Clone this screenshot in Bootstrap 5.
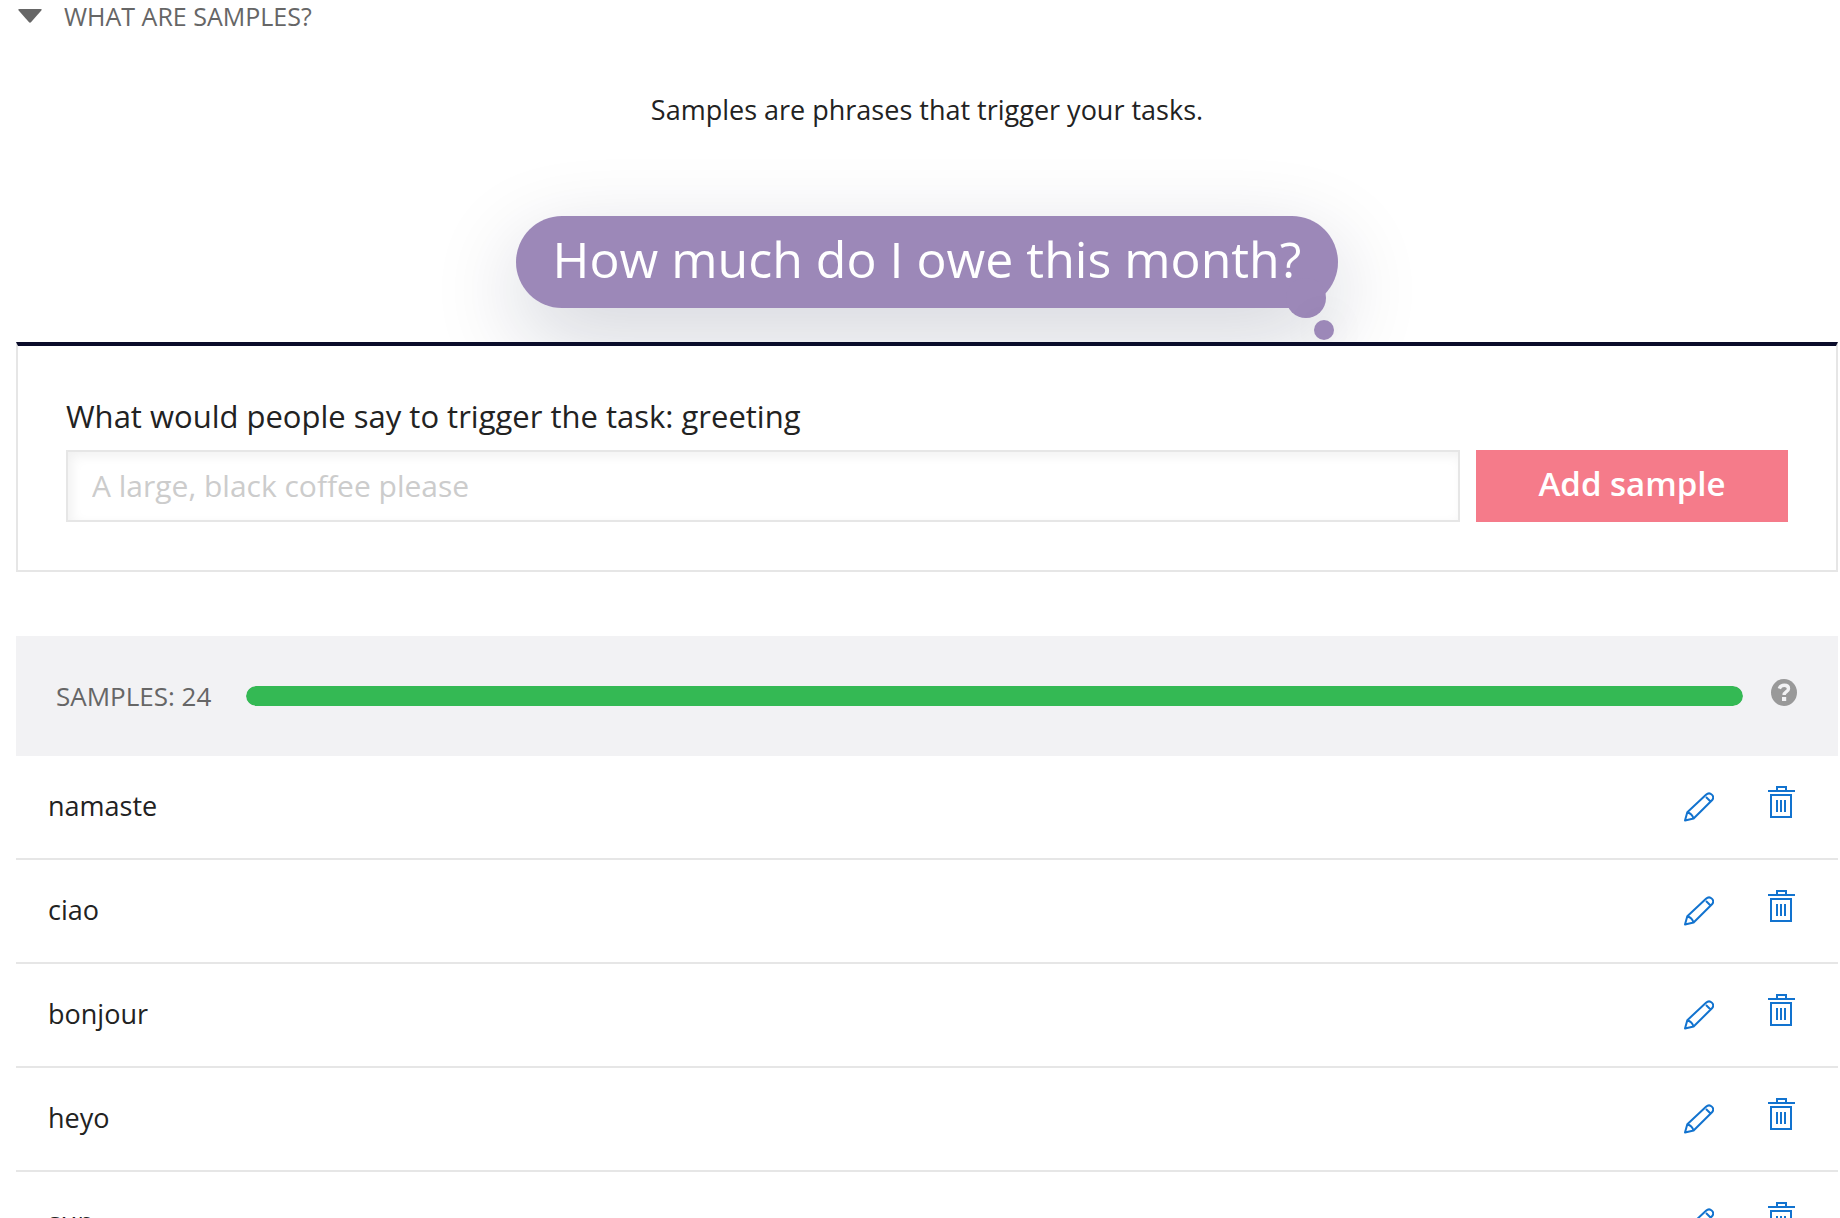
<!DOCTYPE html>
<html lang="en">
<head>
<meta charset="utf-8">
<meta name="viewport" content="width=device-width, initial-scale=1">
<title>Samples</title>
<link href="https://cdn.jsdelivr.net/npm/bootstrap@5.3.0/dist/css/bootstrap.min.css" rel="stylesheet">
<style>
  body { font-family: "Open Sans", "Noto Sans", sans-serif; font-weight: 500; color: #222; background: #fff; font-size: 27px; line-height: 32px; overflow-x: hidden; }
  .page-wrap { height: 100vh; overflow: hidden; padding: 0 2px 0 16px; }
  .explain-toggle { background: none; border: 0; padding: 0 2px; gap: 22px; color: #666; font-size: 25px; line-height: 32px; font-weight: 500; }
  .explain-text { margin-top: 62px; }
  .bubble-row { margin-top: 90px; padding-bottom: 34px; }
  .bubble { position: relative; background: #9c88b8; color: #fff; font-size: 50px; line-height: 86px; padding-bottom: 6px; font-weight: 400; width: 822px; text-align: center; border-radius: 46px; box-shadow: 0 28px 88px rgba(10, 20, 60, .19); }
  .bubble::before, .bubble::after { content: ""; position: absolute; background: #9c88b8; border-radius: 50%; }
  .bubble::before { width: 40px; height: 40px; right: 12px; bottom: -10px; }
  .bubble::after { width: 20px; height: 20px; right: 4px; bottom: -32px; box-shadow: 0 0 40px rgba(10, 20, 60, .12); }
  .bubble span { position: relative; z-index: 1; }
  .entry-panel { position: relative; background: #fff; border: 2px solid #e6e6e6; border-top: 4px solid #0a0c2a; padding: 48px; }
  .entry-panel label { font-size: 31px; line-height: 44px; margin-bottom: 12px; }
  .entry-panel .form-control { height: 72px; border: 2px solid #e6e6e6; border-radius: 0; padding: 0 24px 2px; font-size: 30px; box-shadow: inset 4px 4px 12px rgba(0, 0, 0, .06); }
  .entry-panel .form-control::placeholder { color: #ccc; }
  .btn-add { width: 312px; height: 72px; border: 0; border-radius: 0; background: #f57b8a; color: #fff; font-size: 33px; font-weight: 600; padding: 0 0 4px; }
  .samples-head { margin-top: 64px; height: 120px; padding: 0 41px 0 40px; gap: 28px; background: #f2f2f4; }
  .samples-count { color: #666; font-size: 26px; min-width: 162px; }
  .progress.samples-bar { height: 20px; border-radius: 10px; background: #ddd; }
  .samples-bar .progress-bar { background: #34b954; border-radius: 10px; }
  .help-btn { background: none; border: 0; padding: 0 0 7px; line-height: 0; }
  .sample-list > .list-group-item.sample-row { border-width: 0 0 2px; border-color: #e6e6e6; }
  .sample-row { height: 104px; padding: 0 43px 2px 32px; color: #222; }
  .icon-btn { background: none; border: 0; padding: 0; line-height: 0; }
  .edit-btn { padding-top: 6px; }
  .delete-btn { padding-bottom: 8px; }
  .sample-actions { gap: 54px; }
</style>
</head>
<body>
<main class="page-wrap">
  <button type="button" class="explain-toggle d-flex align-items-center" aria-expanded="true">
    <svg width="24" height="14" viewBox="0 0 24 14" aria-hidden="true"><path d="M1.500 0h21q2 0 .8 1.400L13.200 13q-1.200 1.300-2.400 0L.7 1.400Q-.5 0 1.500 0z" fill="#666"/></svg>
    WHAT ARE SAMPLES?
  </button>
  <p class="explain-text text-center mb-0">Samples are phrases that trigger your tasks.</p>
  <div class="bubble-row d-flex justify-content-center">
    <div class="bubble"><span>How much do I owe this month?</span></div>
  </div>

  <form class="entry-panel" onsubmit="return false">
    <label for="sample" class="d-block">What would people say to trigger the task: greeting</label>
    <div class="d-flex gap-3">
      <input id="sample" type="text" class="form-control flex-grow-1" placeholder="A large, black coffee please">
      <button type="submit" class="btn btn-add flex-shrink-0">Add sample</button>
    </div>
  </form>

  <section>
    <div class="samples-head d-flex align-items-center">
      <span class="samples-count text-nowrap">SAMPLES: 24</span>
      <div class="progress samples-bar flex-grow-1" role="progressbar" aria-label="Samples" aria-valuenow="100" aria-valuemin="0" aria-valuemax="100">
        <div class="progress-bar w-100"></div>
      </div>
      <button type="button" class="help-btn" aria-label="Help">
        <svg width="26" height="27" viewBox="0 0 26 27"><ellipse cx="13" cy="13.500" rx="13" ry="13.500" fill="#999"/><path d="M8.300 9.600C9.300 7.200 11 6.300 13.200 6.300c2.600 0 4.300 1.300 4.300 3.400 0 3-4.400 2.800-4.400 6.300" fill="none" stroke="#f2f2f4" stroke-width="3.400"/><path d="M11 18h4.200v4H11z" fill="#f2f2f4"/></svg>
      </button>
    </div>
    <ul class="list-group list-group-flush sample-list" id="sample-list"></ul>
  </section>
</main>

<svg class="d-none" aria-hidden="true">
  <symbol id="pencil" viewBox="0 0 30 30"><path d="M1 28.500l2.300-8.300L22 2.800c4-3.700 9.500 1.400 6 5.500L9.600 26.500zM3.500 20.500q4.500 1 6 6M22 5l4.300 4.200" fill="none" stroke="#1273cf" stroke-width="2" stroke-linejoin="round"/></symbol>
  <symbol id="trash" viewBox="0 0 27 32"><path d="M0 5h27M9 5V1h9v4M3 9h20v22H3zM9 14v12M13 14v12M17 14v12" fill="none" stroke="#1273cf" stroke-width="2"/></symbol>
</svg>
<script src="https://cdn.jsdelivr.net/npm/bootstrap@5.3.0/dist/js/bootstrap.bundle.min.js"></script>
<script>
  const samples = ["namaste", "ciao", "bonjour", "heyo", "sup"];
  document.getElementById("sample-list").innerHTML = samples.map(s => `
    <li class="list-group-item sample-row d-flex align-items-center justify-content-between">
      <span>${s}</span>
      <div class="sample-actions d-flex align-items-start">
        <button type="button" class="icon-btn edit-btn" aria-label="Edit ${s}"><svg width="30" height="30"><use href="#pencil"/></svg></button>
        <button type="button" class="icon-btn delete-btn" aria-label="Delete ${s}"><svg width="27" height="32"><use href="#trash"/></svg></button>
      </div>
    </li>`).join("");
</script>
</body>
</html>
